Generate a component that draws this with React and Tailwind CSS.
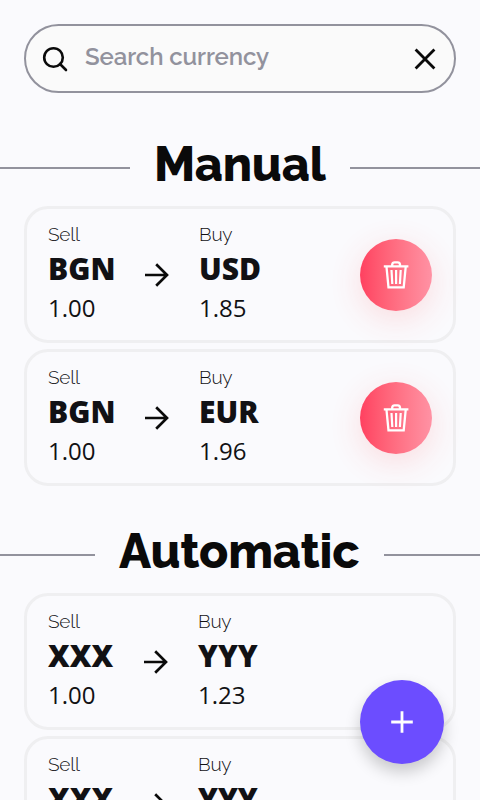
import React from "react";

function SearchIcon() {
  return (
    <svg className="block h-8 w-8 shrink-0" viewBox="0 0 32 32" fill="none" stroke="#0a0a0a" strokeWidth="2.6">
      <circle cx="14.5" cy="14.5" r="9.3" />
      <path d="M21 21 27 27" strokeLinecap="round" />
    </svg>
  );
}

function CloseIcon() {
  return (
    <svg className="block h-8 w-8 shrink-0" viewBox="0 0 32 32" fill="none" stroke="#0a0a0a" strokeWidth="2.8">
      <path d="M6.6 6.6 25.4 25.4M25.4 6.6 6.6 25.4" />
    </svg>
  );
}

function ArrowIcon() {
  return (
    <svg className="block h-8 w-8 shrink-0" viewBox="0 0 32 32" fill="none" stroke="#0a0a0a" strokeWidth="2.7">
      <path d="M4 16H26.5M15.2 5.2 26 16 15.2 26.8" />
    </svg>
  );
}

function TrashIcon() {
  return (
    <svg className="block h-8 w-8" viewBox="0 0 32 32" fill="none" stroke="#fff" strokeWidth="2.3">
      <path d="M3.8 7.3H28.4M6.5 8 8.5 28.3H23.7L25.7 8M12.2 7V5.5Q12.5 3.3 14.5 3.3H17.7Q19.7 3.3 20 5.5V7" />
      <path d="M11.5 11 12.3 25M16.1 11V25M20.7 11 19.9 25" strokeWidth="2.2" />
    </svg>
  );
}

function Heading({ children, line }) {
  return (
    <div className="flex h-[60px] items-center">
      <div className={`${line} mt-2 h-0.5 shrink-0 bg-[#92929d]`} />
      <h2 className="mx-6 shrink-0 text-center font-['Raleway','Lato',sans-serif] text-5xl leading-[60px] font-extrabold tracking-[-0.2px] text-[#0a0a0a]">{children}</h2>
      <div className="mt-2 h-0.5 flex-1 bg-[#92929d]" />
    </div>
  );
}

function Amount({ label, code, value }) {
  return (
    <div className="flex flex-col font-['Open_Sans',sans-serif] text-[#111114]">
      <span className="h-[25px] font-['Raleway','Lato',sans-serif] text-[19px] leading-[22px] font-light tracking-[-0.2px]">{label}</span>
      <span className="h-[41px] text-[30px] leading-[41px] font-extrabold">{code}</span>
      <span className="h-[37px] text-2xl leading-[37px] font-normal">{value}</span>
    </div>
  );
}

function Card({ sell, buy, rate, removable }) {
  return (
    <li className="flex h-[137px] items-center rounded-[24px] border-[3px] border-[#efeff1] pr-[21px] pl-[21px]">
      <div className={removable ? "w-[93px]" : "w-[92px]"}>
        <Amount label="Sell" code={sell} value="1.00" />
      </div>
      <ArrowIcon />
      <div className="ml-[26px] flex-1">
        <Amount label="Buy" code={buy} value={rate} />
      </div>
      {removable && (
        <button className="flex h-[72px] w-[72px] items-center justify-center rounded-full bg-linear-to-r from-[#ff4060] to-[#ff92a4] shadow-[0_8px_32px_rgba(255,64,64,0.16)]">
          <TrashIcon />
        </button>
      )}
    </li>
  );
}

export default function App() {
  return (
    <div className="h-[800px] w-[480px] overflow-hidden bg-[#fafafd]">
      <div className="px-6 pt-6">
        <div className="flex h-[69px] items-center rounded-full border-2 border-[#92929d] bg-[#fafafa] px-[13px]">
          <SearchIcon />
          <input
            className="ml-[14px] h-10 min-w-0 flex-1 pb-1 font-['Raleway','Lato',sans-serif] text-2xl font-semibold tracking-[-0.1px] outline-none placeholder:text-[#92929d]"
            placeholder="Search currency"
          />
          <CloseIcon />
        </div>
      </div>
      <div className="mt-[41px]">
        <Heading line="w-[130px]">Manual</Heading>
      </div>
      <ul className="mt-3 flex flex-col gap-1.5 px-6">
        <Card sell="BGN" buy="USD" rate="1.85" removable />
        <Card sell="BGN" buy="EUR" rate="1.96" removable />
      </ul>
      <div className="mt-[35px]">
        <Heading line="w-[95px]">Automatic</Heading>
      </div>
      <ul className="mt-3 flex flex-col gap-1.5 px-6">
        <Card sell="XXX" buy="YYY" rate="1.23" />
        <Card sell="XXX" buy="YYY" rate="1.23" />
      </ul>
      <button className="fixed top-[680px] left-[360px] flex h-[84px] w-[84px] items-center justify-center rounded-full bg-[#6c4dff] shadow-[0_8px_16px_rgba(0,0,0,0.2)]">
        <svg className="block h-6 w-6" viewBox="0 0 24 24" stroke="#fff" strokeWidth="2.8">
          <path d="M1.2 12H22.8M12 1.2V22.8" />
        </svg>
      </button>
    </div>
  );
}
